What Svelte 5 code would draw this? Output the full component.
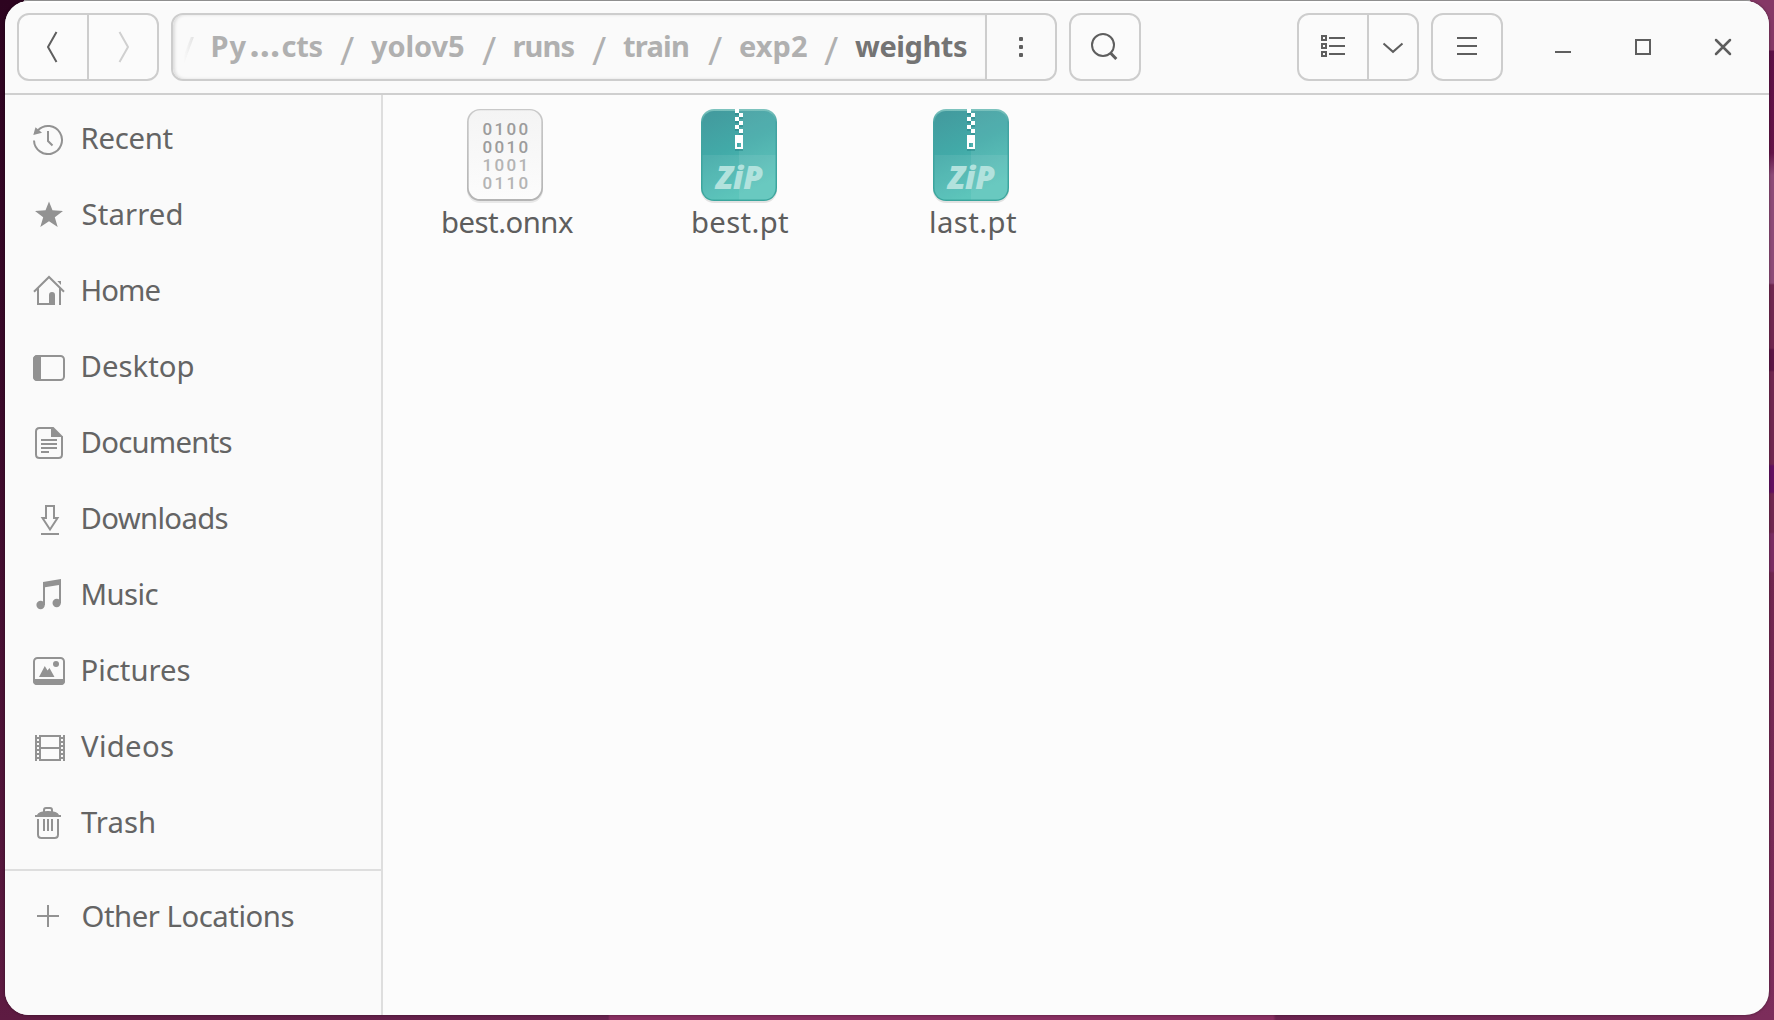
<script>
  const crumbs = [
    {
      cell: 160,
      lead: 32.5,
      faint: true,
      parts: [
        { text: 'Py', ink: 34 },
        { text: '…', ink: 0, dots: true },
        { text: 'cts', ink: 40 },
      ],
    },
    { cell: 142, lead: 31, parts: [{ text: 'yolov5', ink: 93 }] },
    { cell: 110, lead: 32.5, parts: [{ text: 'runs', ink: 60 }] },
    { cell: 116, lead: 31, parts: [{ text: 'train', ink: 65 }] },
    { cell: 116, lead: 32, parts: [{ text: 'exp2', ink: 67 }] },
    { cell: 160, lead: 31, current: true, parts: [{ text: 'weights', ink: 112 }] },
  ];

  const places = [
    { name: 'Recent', icon: 'recent', ink: 90 },
    { name: 'Starred', icon: 'starred', ink: 99 },
    { name: 'Home', icon: 'home', ink: 78 },
    { name: 'Desktop', icon: 'desktop', ink: 111 },
    { name: 'Documents', icon: 'documents', ink: 149 },
    { name: 'Downloads', icon: 'downloads', ink: 145 },
    { name: 'Music', icon: 'music', ink: 76 },
    { name: 'Pictures', icon: 'pictures', ink: 107 },
    { name: 'Videos', icon: 'videos', ink: 92, tight: true },
    { name: 'Trash', icon: 'trash', ink: 73, tight: true },
  ];

  const files = [
    { name: 'best.onnx', kind: 'binary', ink: 130, nudge: 0 },
    { name: 'best.pt', kind: 'zip', ink: 95, nudge: 1 },
    { name: 'last.pt', kind: 'zip', ink: 85, nudge: 3 },
  ];

  // Tracks a label so that its visible glyphs span `ink` pixels.
  // A single glyph keeps its natural width.
  function fit(node, ink) {
    const style = getComputedStyle(node);
    const ctx = document.createElement('canvas').getContext('2d');
    ctx.font = `${style.fontWeight} ${style.fontSize} ${style.fontFamily}`;
    const text = node.textContent;
    const m = ctx.measureText(text);
    const natural = m.actualBoundingBoxRight + m.actualBoundingBoxLeft;
    const gap = text.length > 1 ? (ink - natural) / (text.length - 1) : 0;
    node.style.letterSpacing = `${gap}px`;
    node.style.marginLeft = `${m.actualBoundingBoxLeft}px`;
    node.style.marginRight = `${m.actualBoundingBoxRight - m.width - gap}px`;
  }
</script>

{#snippet placeIcon(icon)}
  <svg class="icon" viewBox="0 0 32 32">
    {#if icon === 'recent'}
      <path class="line" d="M1 17.5A14 14 0 1 0 5 7.2M15 8V18L19.5 22.5" />
      <path class="solid" d="M.3 12 2.5 4.2 9 9.8Z" />
    {:else if icon === 'starred'}
      <path class="solid" d="M16 2.5 19.5 11.2 30 12 21.8 18.2 24.7 28 16 22.3 7.3 28 10.2 18.2 2 12 12.5 11.2Z" />
    {:else if icon === 'home'}
      <path class="line" d="M1 16.7 16 2 31 16.7M5 13V29H22M27 13V30" />
      <path class="solid" d="M16 30V20Q16 17 19 17T22 20V30ZM24.3 6H28V10Z" />
    {:else if icon === 'desktop'}
      <rect class="line" x="1" y="5" width="30" height="24" rx="3.5" />
      <path class="solid" d="M8 4H4.5Q0 4 0 8.5V25.5Q0 30 4.5 30H8Z" />
    {:else if icon === 'documents'}
      <path class="line" d="M20 1H6.5Q3 1 3 4.5V27.5Q3 31 6.5 31H25.5Q29 31 29 27.5V9.5M8 13H24M8 17H24M8 21H24M8 25H16" />
      <path class="solid" d="M18 0H20.5L30 9.5V10H18Z" />
    {:else if icon === 'downloads'}
      <path class="line" d="M13 3H21V15H24.5L17 26.5 9.5 15H13ZM8 31H26" />
    {:else if icon === 'music'}
      <path class="solid" d="M10 3 28 0V24H26V6L12 8.3V26H10Z" />
      <circle class="solid" cx="7.6" cy="26" r="4.2" /><circle class="solid" cx="23.7" cy="24" r="4.2" />
    {:else if icon === 'pictures'}
      <rect class="line" x="1" y="3" width="30" height="26" rx="3.5" />
      <path class="solid" d="M0 24H32V26Q32 30 28 30H4Q0 30 0 26ZM6 22 11.8 11 14.5 15.5 16.5 13 21.5 22Z" />
      <circle class="solid" cx="23" cy="9" r="3" />
    {:else if icon === 'videos'}
      <path class="line" d="M3 4V30M7 4V30M27 4V30M31 4V30M7 5H27M7 17H27M7 29H27" />
      <path class="line" d="M4 7H6M4 11H6M4 15H6M4 19H6M4 23H6M4 27H6M28 7H30M28 11H30M28 15H30M28 19H30M28 23H30M28 27H30" />
    {:else if icon === 'trash'}
      <path class="line" d="M5 12V27.5Q5 31 8.5 31H21.5Q25 31 25 27.5V12M11 12V24M15 12V24M19 12V24M11 5V3Q11 1 13 1H17Q19 1 19 3V5" />
      <path class="solid" d="M2 8H4Q5.5 4 15 4T26 8H28V10H2Z" />
    {:else}
      <path class="line" d="M4 15H26M15 4V26" />
    {/if}
  </svg>
{/snippet}

{#snippet place(name, icon, ink, tight)}
  <li class="place" class:tight>
    {@render placeIcon(icon)}
    <span class="name" use:fit={ink}>{name}</span>
  </li>
{/snippet}

<div class="desktop">
  <main class="window">
    <header class="bar">
      <div class="group">
        <button class="btn" aria-label="Back"><svg class="icon" viewBox="0 0 32 32"><path d="M19.5 1 11 16 19.5 31" /></svg></button>
        <button class="btn off" aria-label="Forward"><svg class="icon" viewBox="0 0 32 32"><path d="M12.5 1 21 16 12.5 31" /></svg></button>
      </div>

      <div class="group path">
        <nav class="crumbs">
          {#each crumbs as c}
            <div class="crumb" class:current={c.current} style:width="{c.cell}px">
              <span class="slash" class:faint={c.faint} style:width="{c.lead}px">/</span>
              <span class="text">{#each c.parts as part}<span class:dots={part.dots} use:fit={part.ink}>{part.text}</span>{/each}</span>
            </div>
          {/each}
        </nav>
        <button class="btn" aria-label="Folder menu">
          <svg class="icon" viewBox="0 0 32 32"><rect class="fill" x="14" y="6" width="4" height="4" rx="1" /><rect class="fill" x="14" y="14" width="4" height="4" rx="1" /><rect class="fill" x="14" y="22" width="4" height="4" rx="1" /></svg>
        </button>
      </div>

      <div class="group">
        <button class="btn" aria-label="Search">
          <svg class="icon" viewBox="0 0 32 32"><circle cx="14" cy="14" r="11" /><path class="thick" d="M21.5 22 27.3 28" /></svg>
        </button>
      </div>

      <div class="group view">
        <button class="btn" aria-label="List view">
          <svg class="icon" viewBox="0 0 32 32"><path d="M5 5h4v4h-4zM5 13h4v4h-4zM5 21h4v4h-4zM12 7H28M12 15H28M12 23H28" /></svg>
        </button>
        <button class="btn narrow" aria-label="View options">
          <svg class="icon" viewBox="0 0 32 32"><path d="M6.5 12.5 16 20.8 25.5 12.5" /></svg>
        </button>
      </div>

      <div class="group">
        <button class="btn" aria-label="Menu">
          <svg class="icon" viewBox="0 0 32 32"><path d="M6 7H26M6 15H26M6 23H26" /></svg>
        </button>
      </div>

      <div class="controls">
        <svg class="icon" viewBox="0 0 32 32"><path d="M8 21H24" /></svg>
        <svg class="icon" viewBox="0 0 32 32"><path d="M9 9H23V23H9Z" /></svg>
        <svg class="icon" viewBox="0 0 32 32"><path class="cross" d="M9 9 23 23M23 9 9 23" /></svg>
      </div>
    </header>

    <div class="body">
      <aside class="sidebar">
        <ul class="places">
          {#each places as p}
            {@render place(p.name, p.icon, p.ink, p.tight)}
          {/each}
        </ul>
        <ul class="places other">
          {@render place('Other Locations', 'plus', 211, false)}
        </ul>
      </aside>

      <section class="files">
        {#each files as f}
          <figure class="file">
            {#if f.kind === 'zip'}
              <svg class="thumb" viewBox="0 0 96 98">
                <defs>
                  <linearGradient id="teal" x1="0" y1="0" x2=".35" y2="1">
                    <stop offset="0" stop-color="#43999d" /><stop offset=".5" stop-color="#42aaa8" /><stop offset="1" stop-color="#50c0b6" />
                  </linearGradient>
                  <linearGradient id="rim" x1="0" y1="0" x2="0" y2="1">
                    <stop offset="0" stop-color="#7fc4bf" /><stop offset=".15" stop-color="#43a3a2" /><stop offset="1" stop-color="#3aa69d" />
                  </linearGradient>
                </defs>
                <rect x="9" y="4" width="76" height="92" rx="13" fill="#000" opacity=".1" />
                <rect x="9" y="2" width="76" height="92" rx="13" fill="url(#rim)" />
                <rect x="10.5" y="4" width="73" height="88.5" rx="11.5" fill="url(#teal)" />
                <path fill="#fff" opacity=".08" d="M47 4H72Q83.5 4 83.5 16V80Q83.5 92.5 72 92.5H47Z" />
                <path fill="#fff" opacity=".08" d="M10.5 48H83.5V80Q83.5 92.5 72 92.5H22Q10.5 92.5 10.5 80Z" />
                <path fill="#1f7f80" opacity=".45" d="M43 6h4v2h-4zM47 10h4v2h-4zM43 14h4v2h-4zM47 18h4v2h-4zM43 22h4v2h-4zM47 26h4v2h-4zM43 42h8v2h-8z" />
                <path fill="#fff" fill-rule="evenodd" d="M43 2h4v4h-4zM47 6h4v4h-4zM43 10h4v4h-4zM47 14h4v4h-4zM43 18h4v4h-4zM47 22h4v4h-4zM43 28h8v14h-8zM45 36v4h4v-4z" />
                <text class="ziptext" x="24" y="82" textLength="47" lengthAdjust="spacingAndGlyphs">ZiP</text>
              </svg>
            {:else}
              <svg class="thumb" viewBox="0 0 96 98">
                <defs>
                  <linearGradient id="edge" x1="0" y1="0" x2="0" y2="1">
                    <stop offset="0" stop-color="#c9c9c9" /><stop offset="1" stop-color="#b4b4b4" />
                  </linearGradient>
                  <linearGradient id="paper" x1="0" y1="0" x2="0" y2="1">
                    <stop offset="0" stop-color="#f4f4f4" /><stop offset="1" stop-color="#fcfcfc" />
                  </linearGradient>
                </defs>
                <rect x="7" y="4" width="76" height="92" rx="13" fill="#000" opacity=".08" />
                <rect x="7" y="2" width="76" height="92" rx="13" fill="url(#edge)" />
                <rect x="8.7" y="3.3" width="72.6" height="88.7" rx="11.5" fill="url(#paper)" />
                <g class="bits">
                  <text x="22.5 34.5 46.5 58.5" y="28">0100</text>
                  <text x="22.5 34.5 46.5 58.5" y="46">0010</text>
                  <text class="pale" x="22.5 34.5 46.5 58.5" y="64">1001</text>
                  <text class="pale" x="22.5 34.5 46.5 58.5" y="82">0110</text>
                </g>
              </svg>
            {/if}
            <figcaption class="caption" style:padding-left="{f.nudge}px"><span class="name" use:fit={f.ink}>{f.name}</span></figcaption>
          </figure>
        {/each}
      </section>
    </div>
  </main>
</div>

<style>
  :global(body) { margin: 0; overflow: hidden; }
  /* Wallpaper slivers that show round the window */
  .desktop {
    box-sizing: border-box;
    width: 1774px;
    height: 1020px;
    padding: 1px 5px 5px;
    font-family: 'Noto Sans', 'Open Sans', sans-serif;
    background:
      linear-gradient(90deg, transparent 24px, #aaa 0, #aaa 1750px, transparent 0) 0 0 / 100% 1px no-repeat,
      linear-gradient(#2d0420, #3b0a2a 40%, #5e1b42) 0 0 / 40px 100% no-repeat,
      linear-gradient(#853866 50px, #5c0f45 51px, #641448 153px, #8d4a77 175px, #8d4a77 283px, #70264f 285px, #70264f 348px, #5c1545 350px, #5c1545 370px, #70264f 372px, #70264f 464px, #621060 466px, #621060 492px, #70264f 494px, #70264f 532px, #7a2c62 534px, #7a2c62 571px, #70264f 573px, #7c2d5b) 100% 0 / 40px 100% no-repeat,
      linear-gradient(90deg, #5e1b42, #6a2450 608px, #8a2f62 610px, #8a2f62 1273px, #6c2350 1276px, #7c2d5b);
  }
  .window {
    height: 1014px;
    display: flex;
    flex-direction: column;
    overflow: hidden;
    border-radius: 24px;
    background: #fcfcfc;
    box-shadow: 0 0 3px rgba(0, 0, 0, .45);
  }
  .bar {
    box-sizing: border-box;
    flex: none;
    height: 94px;
    display: flex;
    align-items: flex-start;
    gap: 12px;
    padding: 12px 30px 0 12px;
    background: #fafafa;
    border-bottom: 2px solid #cfcfcf;
    box-shadow: inset 0 2px #fff;
  }
  .group {
    box-sizing: border-box;
    height: 68px;
    display: flex;
    border: 2px solid #cdcdcd;
    border-radius: 12px;
    background: #fbfbfb;
    overflow: hidden;
  }
  .btn {
    box-sizing: content-box;
    width: 68px;
    height: 64px;
    padding: 0;
    border: 0;
    background: none;
    display: flex;
    align-items: center;
    justify-content: center;
  }
  .btn + .btn, .crumbs + .btn { border-left: 2px solid #cdcdcd; }
  .btn.narrow { width: 48px; }
  .icon { display: block; width: 32px; height: 32px; flex: none; }
  .bar .icon { fill: none; stroke: #5e5e5e; stroke-width: 2; }
  .bar .off .icon { stroke: #d0d0d0; }
  .bar .fill { fill: #5e5e5e; stroke: none; }
  .bar .thick { stroke-width: 3; }
  .bar .cross { stroke-width: 2.5; stroke-linecap: round; }
  .path { width: 886px; background: #fafafa; }
  .crumbs {
    box-sizing: border-box;
    width: 812px;
    padding-left: 7px;
    display: flex;
    flex: none;
    box-shadow: inset 2px 0 3px #ddd;
    border-radius: 10px 0 0 10px;
  }
  .crumb {
    display: flex;
    flex: none;
    height: 64px;
    color: #b0b0b0;
    font-size: 29px;
    font-weight: 700;
    line-height: 62px;
    white-space: nowrap;
  }
  .text { display: flex; align-items: baseline; gap: 4px; }
  .dots { font-size: 36px; line-height: 1; }
  .current .text { color: #747474; }
  .slash { flex: none; font-family: 'Open Sans', 'Noto Sans', sans-serif; font-size: 39px; font-weight: 400; line-height: 69px; }
  .faint { color: transparent; background: linear-gradient(90deg, transparent 4px, #ddd 16px) text; }
  .view { margin-left: auto; }
  .controls { display: flex; gap: 48px; margin: 18px 0 0 32px; }
  .body { flex: 1; display: flex; min-height: 0; }
  .sidebar {
    box-sizing: border-box;
    width: 378px;
    flex: none;
    background: #fafafa;
    border-right: 2px solid #dedede;
  }
  .places { list-style: none; margin: 0; padding: 6px 0 8px; }
  .other { padding: 8px 0; border-top: 2px solid #dedede; }
  .place {
    height: 76px;
    display: flex;
    align-items: center;
    gap: 17.5px;
    padding-left: 28px;
    color: #646464;
    font-size: 29.3px;
    line-height: 40px;
    white-space: nowrap;
  }
  .place.tight { gap: 16px; }
  .place .name { padding-bottom: 2px; }
  .line { fill: none; stroke: #929292; stroke-width: 2; }
  .solid { fill: #929292; }
  .files { flex: 1; display: flex; align-items: flex-start; padding: 12px 0 0 9px; }
  .file { margin: 0; width: 232px; display: flex; flex-direction: column; align-items: center; }
  .thumb { display: block; width: 96px; height: 98px; }
  .caption {
    display: flex;
    justify-content: center;
    color: #5e5e5e;
    font-size: 29.3px;
    line-height: 34px;
    white-space: nowrap;
  }
  .ziptext { font: italic 900 32px 'Noto Sans', 'Open Sans', sans-serif; fill: #b2e2dd; }
  .bits { font: 500 17px Roboto, sans-serif; fill: #9c9c9c; }
  .pale { fill: #b4b4b4; }
</style>
